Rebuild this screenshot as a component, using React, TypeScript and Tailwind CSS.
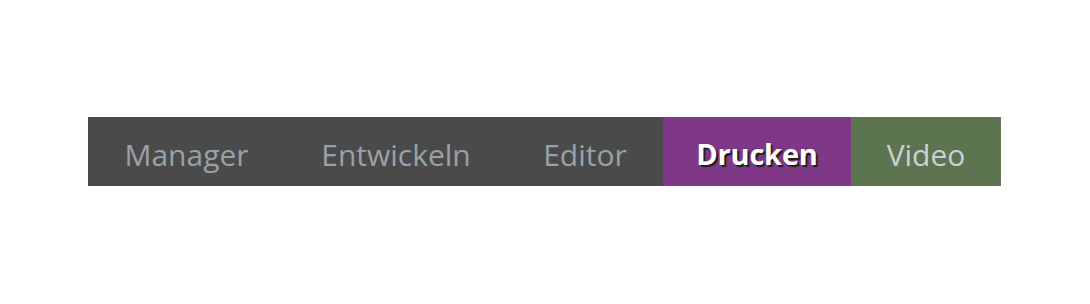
const items = [
  { label: "Manager", width: "w-[197px]", bg: "", color: "text-[#99a1a8] font-normal text-[30px]" },
  { label: "Entwickeln", width: "w-[222px]", bg: "", color: "text-[#99a1a8] font-normal text-[30px]" },
  { label: "Editor", width: "w-[156px]", bg: "", color: "text-[#99a1a8] font-normal text-[30px]" },
  {
    label: "Drucken",
    width: "w-[188px]",
    bg: "bg-[#7f3888]",
    color: "text-white font-bold text-[29px] tracking-[-0.2px] [text-shadow:2px_2px_1px_#1e1e1e]",
  },
  { label: "Video", width: "w-[150px]", bg: "bg-[#5c744f]", color: "text-[#c9d0d4] font-normal text-[30px]" },
];

export default function App() {
  return (
    <div className="flex h-[304px] w-[1090px] items-start bg-white pl-[88px] pt-[117px] font-['Open_Sans',sans-serif]">
      <nav className="flex h-[69px] bg-[#4a4a4a]">
        {items.map((item) => (
          <a
            key={item.label}
            href="#"
            className={`flex ${item.width} ${item.bg} ${item.color} items-center justify-center pt-[5px]`}
          >
            {item.label}
          </a>
        ))}
      </nav>
    </div>
  );
}
